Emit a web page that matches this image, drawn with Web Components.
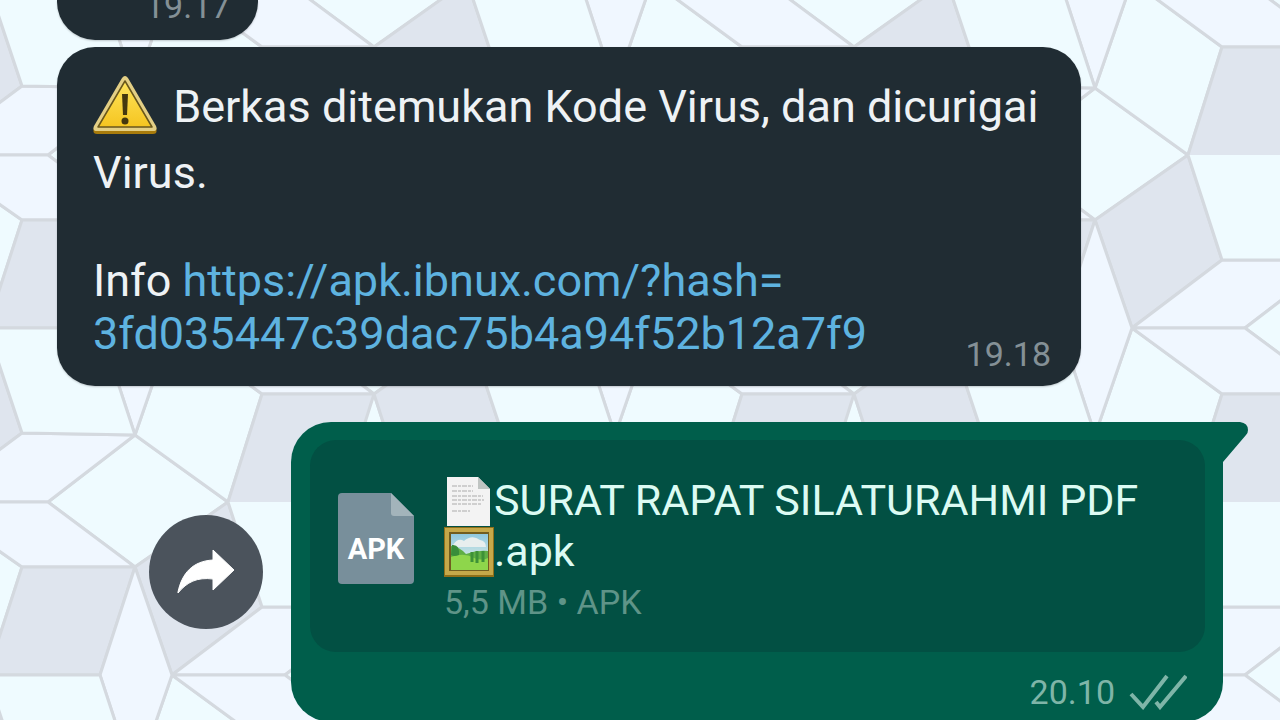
<!DOCTYPE html>
<html lang="id">
<head>
<meta charset="utf-8">
<meta name="viewport" content="width=device-width, initial-scale=1">
<title>Chat</title>
<style>
  html, body { margin: 0; min-height: 100%; }
  body { background: #f0f8ff; font-family: Roboto, "Noto Sans", sans-serif; overflow: hidden; }
  a { color: #5eb3e0; text-decoration: none; }
</style>
</head>
<body>
<chat-view>
  <chat-bubble continued><message-time slot="meta">19.17</message-time></chat-bubble>
  <chat-bubble>
    <p><emoji-icon name="warning"></emoji-icon> Berkas ditemukan Kode Virus, dan dicurigai Virus.</p>
    <p slot="last">Info <a href="https://apk.ibnux.com/?hash=3fd035447c39dac75b4a94f52b12a7f9">https://apk.ibnux.com/?hash=<wbr>3fd035447c39dac75b4a94f52b12a7f9</a></p>
    <message-time slot="meta">19.18</message-time>
  </chat-bubble>
  <sent-row>
    <file-card type="APK">
      <emoji-icon name="page"></emoji-icon>SURAT RAPAT SILATURAHMI PDF <emoji-icon name="picture"></emoji-icon>.apk
      <span slot="info">5,5 MB • APK</span>
    </file-card>
    <message-time slot="meta" sent>20.10</message-time>
  </sent-row>
</chat-view>

<script>
const define = (name, html, setup) => {
  const template = document.createElement('template');
  template.innerHTML = html;
  customElements.define(name, class extends HTMLElement {
    constructor() {
      super();
      this.attachShadow({ mode: 'open' }).append(template.content.cloneNode(true));
    }
    connectedCallback() { if (setup) setup(this, this.shadowRoot); }
  });
};

/* Wallpaper: one 480 x 347 tile of quadrilaterals, repeated over the view. */
define('chat-wallpaper', `
<style>
  :host { display: block; }
  svg { display: block; width: 100%; height: 100%; }
  g { stroke: #d4d9df; stroke-width: 3; stroke-linejoin: round; }
  .w { fill: #effbff; } .b { fill: #f0f7ff; } .g { fill: #dfe5ee; }
</style>
<svg aria-hidden="true">
  <defs>
    <g id="cell">
      <path class="w" d="M135 88L48 155L135 220L228 155Z"/>
      <path class="w" d="M135 88L228 155L262 47L172-19Z"/>
      <path class="b" d="M172-19L262 47H374L285-19Z"/>
      <path class="b" d="M135 88L100-19L135-127L172-19Z"/>
      <path class="b" d="M22 86L135 88L48 155H-71Z"/>
      <path class="b" d="M48 155L135 220H22L-71 155Z"/>
      <path class="w" d="M100-19L135 88L22 86L-13-19Z"/>
      <path class="g" d="M22 220H135L100 328H-13Z"/>
      <path class="g" d="M228 155L135 220L172 328L262 260Z"/>
      <path class="b" d="M262 260H374L285 328H172Z"/>
      <path class="w" d="M285 328L374 260L467 328L374 394Z"/>
      <path class="w" d="M409 155L502 220L467 328L374 260Z"/>
      <path class="g" stroke="none" d="M228 155L262 47H374L340 155Z"/>
      <path class="w" stroke="none" d="M228 155H340L374 260H262Z"/>
      <path class="w" d="M374 47L409 155L374 260L340 155Z"/>
      <path class="g" d="M374 47L467-19L502 86L409 155Z"/>
      <path fill="none" d="M228 155L262 47H374M228 155L262 260H374"/>
    </g>
    <pattern id="tile" width="480" height="347" patternUnits="userSpaceOnUse">
      <use href="#cell" x="-480" y="-347"/><use href="#cell" y="-347"/><use href="#cell" x="480" y="-347"/>
      <use href="#cell" x="-480"/><use href="#cell"/><use href="#cell" x="480"/>
      <use href="#cell" x="-480" y="347"/><use href="#cell" y="347"/><use href="#cell" x="480" y="347"/>
    </pattern>
  </defs>
  <rect width="100%" height="100%" fill="url(#tile)"/>
</svg>`);

define('chat-view', `
<style>
  :host { display: block; position: relative; min-height: 100vh; }
  chat-wallpaper { position: absolute; inset: 0; z-index: -1; }
  main { display: flex; flex-direction: column; padding: 0 57px; }
</style>
<chat-wallpaper></chat-wallpaper>
<main><slot></slot></main>`);

define('chat-bubble', `
<style>
  :host { display: block; margin: 0 142px 36px 0; padding: 27px 30px 26px 36px;
    border-radius: 38px; background: #202c33; color: #eef2f5; font-size: 45px; line-height: 53px;
    box-shadow: 0 1px 2px #0003; }
  :host([continued]) { align-self: flex-start; margin: 0 0 7px; padding: 0 28px 14px 88px; border-radius: 0 0 38px 38px; }
  :host([continued]) footer { height: 26px; margin: 0; }
  :host([continued]) ::slotted(message-time) { margin: 0; }
  footer { display: flex; justify-content: space-between; align-items: flex-end; margin-top: 48px; }
  ::slotted(p) { margin: 0; line-height: 66px; }
  ::slotted(p[slot="last"]) { flex: 1; line-height: 53px; }
</style>
<slot></slot>
<footer><slot name="last"></slot><slot name="meta"></slot></footer>`);

define('message-time', `
<style>
  :host { display: flex; align-items: center; gap: 16px; color: #849096; font-size: 34px; line-height: 40px; margin-bottom: -14px; }
  :host([sent]) { gap: 14px; margin-bottom: 0; color: #7fb5a8; }
  svg { display: none; width: 58px; height: 36px; }
  :host([sent]) svg { display: block; }
</style>
<time><slot></slot></time>
<svg viewBox="0 0 58 36" fill="none" stroke="currentColor" stroke-width="4" aria-hidden="true"><path d="M2 20L14 33L38 2M27 28L31 33L57 2"/></svg>`);

define('forward-button', `
<style>
  :host { display: block; flex: none; }
  button { display: grid; place-items: center; width: 114px; height: 114px; padding: 0; border: 0; border-radius: 50%; background: #4b535c; }
  svg { width: 58px; height: 46px; }
</style>
<button type="button" aria-label="Teruskan"><svg viewBox="0 0 58 46" aria-hidden="true"><path fill="#fff" stroke="#fff" stroke-linejoin="round" d="M1 43C5 24 16 12 36 11V1L57 21L36 41V30C20 28 10 33 1 44Z"/></svg></button>`);

define('sent-row', `
<style>
  :host { display: flex; align-items: center; gap: 28px; padding-left: 92px; }
  article { position: relative; flex: 1; padding: 18px 18px 8px 19px; border-radius: 40px 0 40px 40px; background: #005e4b; }
  footer { display: flex; justify-content: flex-end; padding: 20px 18px 2px 0; }
  .tail { position: absolute; top: 0; left: calc(100% - 1px); width: 26px; height: 40px; fill: #005e4b; }
</style>
<forward-button></forward-button>
<article>
  <svg class="tail" viewBox="0 0 26 40" aria-hidden="true"><path d="M0 0H18Q26 1 26 8Q26 11 24 13L1 40H0Z"/></svg>
  <slot></slot>
  <footer><slot name="meta"></slot></footer>
</article>`);

define('file-card', `
<style>
  :host { display: flex; align-items: flex-start; gap: 30px; padding: 35px 28px 25px; border-radius: 26px; background: #025043; }
  .icon { display: grid; flex: none; margin-top: 18px; width: 76px; height: 91px; }
  .icon > * { grid-area: 1 / 1; }
  .icon b { align-self: center; justify-self: center; padding-top: 20px; color: #fff; font-size: 29px; line-height: 30px; }
  .name { color: #dcfbf3; font-size: 43px; line-height: 51px; }
  .info { color: #5f9488; font-size: 34px; line-height: 50px; }
</style>
<div class="icon">
  <svg viewBox="0 0 76 91" aria-hidden="true"><path fill="#788f9b" d="M4 0H53L76 23V87Q76 91 72 91H4Q0 91 0 87V4Q0 0 4 0Z"/><path fill="#a3b4bb" d="M53 0L76 23H56Q53 23 53 20Z"/></svg>
  <b></b>
</div>
<div><div class="name"><slot></slot></div><div class="info"><slot name="info"></slot></div></div>`,
(host, root) => { root.querySelector('b').textContent = host.getAttribute('type'); });

const emoji = {
  warning: `<svg width="64" height="60" viewBox="0 0 64 60"><defs><linearGradient id="y" x2="0" y2="1"><stop stop-color="#ffe45c"/><stop offset="1" stop-color="#f5c520"/></linearGradient></defs>
    <path fill="#a87b0b" d="M29 4Q32-1 35 4L63 53Q65 59 60 59H4Q-1 59 1 53Z"/>
    <path fill="#e3cf85" d="M29 3Q32-1 35 3L63 51Q65 56 60 56H4Q-1 56 1 51Z"/>
    <path fill="url(#y)" stroke="#69571b" stroke-width="1.5" stroke-linejoin="round" d="M32 6L59 52H5Z"/>
    <path fill="#45380f" d="M29 19H35L34 40H30Z"/><circle cx="32" cy="46" r="3.5" fill="#45380f"/></svg>`,
  page: `<svg width="50" height="50" viewBox="0 0 50 50"><path fill="#f3f3f3" d="M3 1H34L46 13V50H3Z"/><path fill="#bfc4c2" d="M34 1L46 13H34Z"/>
    <path stroke="#c3c3c3" stroke-width="1.5" stroke-dasharray="5 1 3 1" d="M8 10H29M8 15H29M8 20H39M8 24H40M8 28H38M8 35H26"/></svg>`,
  picture: `<svg width="50" height="50" viewBox="0 0 50 50"><defs><linearGradient id="s" x2="0" y2="1"><stop stop-color="#8fc8e0"/><stop offset="1" stop-color="#f2f7e5"/></linearGradient></defs>
    <path fill="#8f6f18" d="M0 0H50V50H0Z"/><path fill="#c5a84a" d="M1 1H49V48H1Z"/><path fill="#715d20" d="M5 5H45V44H5Z"/><path fill="url(#s)" d="M7 7H44V43H7Z"/>
    <path fill="#e8eeee" d="M9 18Q14 10 20 14Q28 7 36 13Q42 14 42 20H9Z"/>
    <path fill="#5fae45" d="M7 19Q16 20 22 27Q33 23 44 24V43H7Z"/><path fill="#8ed64b" d="M7 30Q20 25 30 31Q38 34 44 31V43H7Z"/>
    <path stroke="#3d9137" stroke-width="3" d="M28 25V35M33 24V36M39 24V35"/><path fill="#398d3a" d="M8 18Q16 17 15 28Q10 30 7 28Z"/></svg>`
};
define('emoji-icon', `
<style>
  :host { display: inline-block; vertical-align: -11px; line-height: 0; }
  :host([name="warning"]) { margin-right: 5px; vertical-align: -13px; }
  svg { display: block; }
</style>`,
(host, root) => { if (!root.querySelector('svg')) root.innerHTML += emoji[host.getAttribute('name')]; });
</script>
</body>
</html>
